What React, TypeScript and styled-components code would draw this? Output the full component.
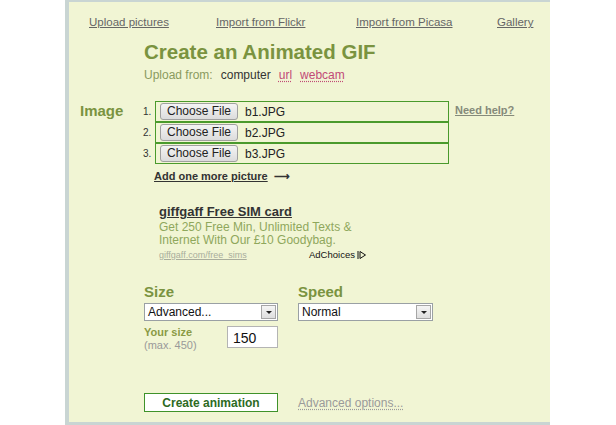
import styled, { createGlobalStyle } from 'styled-components';

const GlobalStyle = createGlobalStyle`
  html, body {
    margin: 0;
    padding: 0;
    background: #fff;
    font-family: "Liberation Sans", Arial, sans-serif;
  }
`;

const Panel = styled.div`
  box-sizing: border-box;
  margin-left: 65px;
  width: 485px;
  height: 425px;
  background: #f1f5d4;
  border-top: 2px solid #c9d5d3;
  border-left: 4px solid #c9d5d3;
  border-bottom: 3px solid #c9d5d3;
  display: flex;
  flex-direction: column;
`;

const Nav = styled.nav`
  display: grid;
  grid-template-columns: 127px 140px 141px auto;
  margin: 14px 0 0 20px;
  font-size: 11.5px;
  line-height: 13px;
`;

const NavLink = styled.a`
  color: #666;
  text-decoration: underline;
  white-space: nowrap;
`;

const Header = styled.div`
  margin: 11px 0 0 75px;
`;

const Title = styled.h1`
  margin: 0;
  font-size: 20.5px;
  line-height: 24px;
  font-weight: bold;
  color: #7a9340;
`;

const UploadFrom = styled.div`
  margin-top: 4px;
  font-size: 12px;
  line-height: 14px;
  color: #8a9a5e;
  display: flex;
  gap: 8px;
`;

const Source = styled.a<{ $active?: boolean }>`
  color: ${p => (p.$active ? '#333' : '#c14a76')};
  text-decoration: ${p => (p.$active ? 'none' : 'underline dotted')};
  text-underline-offset: 2px;
`;

const ImageSection = styled.div`
  display: grid;
  grid-template-columns: 63px auto;
  margin: 19px 0 0 11px;
`;

const SectionLabel = styled.div`
  font-size: 15px;
  font-weight: bold;
  color: #7a9340;
  line-height: 17px;
  padding-top: 1px;
`;

const Files = styled.div`
  display: flex;
  flex-direction: column;
`;

const FileLine = styled.div`
  display: flex;
  align-items: flex-start;
`;

const Num = styled.span`
  width: 12px;
  font-size: 10px;
  line-height: 21px;
  color: #333;
`;

const FileBox = styled.div`
  box-sizing: border-box;
  width: 294px;
  height: 21px;
  border: 1px solid #4a9a2c;
  display: flex;
  align-items: center;
  padding-left: 4px;
  gap: 7px;
  font-size: 12px;
  color: #222;
`;

const ChooseButton = styled.span`
  box-sizing: border-box;
  width: 78px;
  height: 17px;
  border: 1px solid #a0a0a0;
  border-radius: 3px;
  background: linear-gradient(#f4f4f4, #dcdcdc);
  font-size: 12px;
  line-height: 15px;
  text-align: center;
  color: #222;
`;

const HelpLink = styled.a`
  margin-left: 6px;
  font-size: 11px;
  font-weight: bold;
  line-height: 13px;
  padding-top: 3px;
  color: #858a7a;
  text-decoration: underline;
`;

const AddMore = styled.div`
  margin: 6px 0 0 85px;
  font-size: 11px;
  line-height: 13px;
  font-weight: bold;
  color: #333;
  display: flex;
  gap: 6px;
`;

const AddLink = styled.a`
  color: #333;
  text-decoration: underline;
`;

const Ad = styled.div`
  margin: 21px 0 0 90px;
  width: 220px;
`;

const AdTitle = styled.a`
  display: block;
  font-size: 13px;
  line-height: 15px;
  font-weight: bold;
  color: #333;
  text-decoration: underline;
`;

const AdText = styled.div`
  margin-top: 2px;
  font-size: 12px;
  line-height: 13px;
  color: #8fa75c;
`;

const AdFooter = styled.div`
  display: flex;
  align-items: baseline;
  margin-top: 2px;
  height: 12px;
  line-height: 12px;
`;

const AdUrl = styled.a`
  font-size: 9px;
  color: #a9ad9c;
  text-decoration: underline;
  width: 150px;
`;

const AdChoices = styled.span`
  font-size: 9.5px;
  color: #111;
  display: inline-flex;
  align-items: center;
  gap: 2px;
`;

const Options = styled.div`
  display: grid;
  grid-template-columns: 154px auto;
  margin: 22px 0 0 75px;
`;

const OptionLabel = styled.div`
  font-size: 15px;
  line-height: 17px;
  font-weight: bold;
  color: #7a9340;
`;

const Select = styled.div<{ $width: number }>`
  box-sizing: border-box;
  margin-top: 3px;
  width: ${p => p.$width}px;
  height: 18px;
  background: #fff;
  border: 1px solid #9aa0a4;
  display: flex;
  align-items: center;
  justify-content: space-between;
  padding: 0 1px 0 3px;
  font-size: 12px;
  color: #111;
`;

const SelectArrow = styled.span`
  box-sizing: border-box;
  width: 15px;
  height: 14px;
  border: 1px solid #a6a6a6;
  background: linear-gradient(#f5f5f5, #dedede);
  display: flex;
  align-items: center;
  justify-content: center;

  &::after {
    content: '';
    border-left: 3px solid transparent;
    border-right: 3px solid transparent;
    border-top: 3px solid #222;
  }
`;

const YourSize = styled.div`
  display: flex;
  margin-top: 5px;
`;

const YourSizeLabel = styled.div`
  width: 83px;
  font-size: 11px;
  line-height: 13px;
  color: #999;
`;

const YourSizeTitle = styled.div`
  font-weight: bold;
  color: #8a9a44;
`;

const SizeInput = styled.input`
  box-sizing: border-box;
  width: 51px;
  height: 22px;
  border: 1px solid #b4b4b4;
  background: #fff;
  padding: 2px 5px 0;
  font-family: inherit;
  font-size: 14px;
  color: #111;
`;

const Actions = styled.div`
  display: flex;
  align-items: center;
  margin: 41px 0 0 75px;
`;

const CreateButton = styled.button`
  box-sizing: border-box;
  width: 134px;
  height: 19px;
  padding: 0;
  border: 1px solid #3f922a;
  background: #fff;
  font-family: inherit;
  font-size: 12px;
  font-weight: bold;
  color: #2d6a1f;
`;

const AdvancedLink = styled.a`
  margin-left: 20px;
  font-size: 12px;
  color: #9a9a9a;
  text-decoration: underline dotted;
  text-underline-offset: 2px;
`;

const files = ['b1.JPG', 'b2.JPG', 'b3.JPG'];

export default function App() {
  return (
    <>
      <GlobalStyle />
      <Panel>
        <Nav>
          <NavLink>Upload pictures</NavLink>
          <NavLink>Import from Flickr</NavLink>
          <NavLink>Import from Picasa</NavLink>
          <NavLink>Gallery</NavLink>
        </Nav>

        <Header>
          <Title>Create an Animated GIF</Title>
          <UploadFrom>
            <span>Upload from:</span>
            <Source $active>computer</Source>
            <Source>url</Source>
            <Source>webcam</Source>
          </UploadFrom>
        </Header>

        <ImageSection>
          <SectionLabel>Image</SectionLabel>
          <FileLine>
            <Files>
              {files.map((f, i) => (
                <FileLine key={f}>
                  <Num>{i + 1}.</Num>
                  <FileBox>
                    <ChooseButton>Choose File</ChooseButton>
                    <span>{f}</span>
                  </FileBox>
                </FileLine>
              ))}
            </Files>
            <HelpLink>Need help?</HelpLink>
          </FileLine>
        </ImageSection>

        <AddMore>
          <AddLink>Add one more picture</AddLink>
          <span>⟶</span>
        </AddMore>

        <Ad>
          <AdTitle>giffgaff Free SIM card</AdTitle>
          <AdText>
            Get 250 Free Min, Unlimited Texts &amp;
            <br />
            Internet With Our £10 Goodybag.
          </AdText>
          <AdFooter>
            <AdUrl>giffgaff.com/free_sims</AdUrl>
            <AdChoices>
              AdChoices
              <svg width="10" height="10" viewBox="0 0 10 10">
                <path d="M1 1 L1 9 M3 1.5 L8.5 5 L3 8.5 Z" fill="none" stroke="#111" strokeWidth="1" />
              </svg>
            </AdChoices>
          </AdFooter>
        </Ad>

        <Options>
          <div>
            <OptionLabel>Size</OptionLabel>
            <Select $width={134}>
              Advanced...
              <SelectArrow />
            </Select>
            <YourSize>
              <YourSizeLabel>
                <YourSizeTitle>Your size</YourSizeTitle>
                (max. 450)
              </YourSizeLabel>
              <SizeInput defaultValue="150" />
            </YourSize>
          </div>
          <div>
            <OptionLabel>Speed</OptionLabel>
            <Select $width={135}>
              Normal
              <SelectArrow />
            </Select>
          </div>
        </Options>

        <Actions>
          <CreateButton>Create animation</CreateButton>
          <AdvancedLink>Advanced options...</AdvancedLink>
        </Actions>
      </Panel>
    </>
  );
}
